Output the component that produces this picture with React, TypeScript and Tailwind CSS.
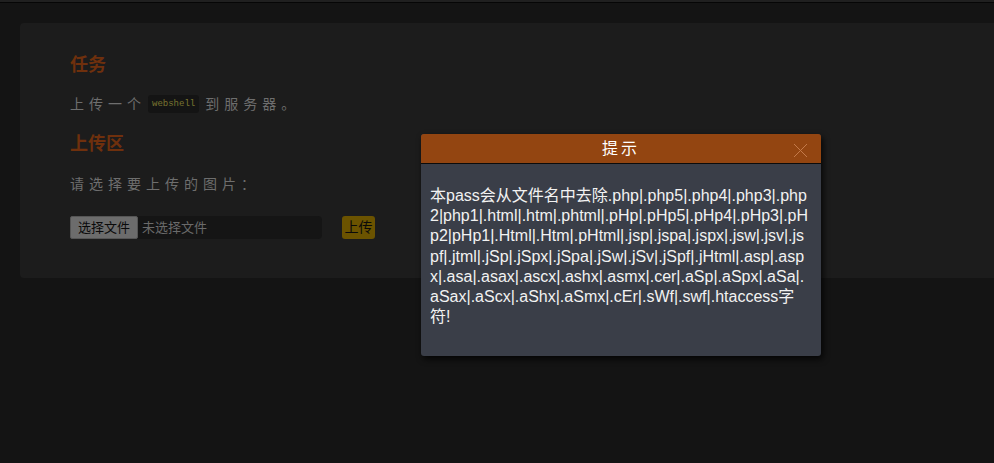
import React from "react";

const cjk = { fontFamily: '"Liberation Sans", "Noto Sans CJK SC", sans-serif' };

export default function App() {
  return (
    <div className="relative h-[463px] w-full overflow-hidden bg-[#141414]" style={cjk}>
      {/* top edge */}
      <div className="h-[2px] bg-[#202020]" />
      <div className="h-px bg-[#060606]" />

      {/* dimmed page panel */}
      <div className="ml-[20px] mt-[20px] h-[255px] rounded-l-[4px] bg-[#1c1c1c] pl-[50px] pt-[30px]">
        <h2 className="text-[18px] font-bold leading-[24px] text-[#6f300d]">任务</h2>
        <p className="mt-[17px] flex items-center text-[14px] leading-[20px] tracking-[5px] text-[#6e6e6e]">
          <span>上传一个</span>
          <code
            className="mx-[2px] rounded-[3px] bg-[#141414] px-[4px] py-[3px] text-[9px] leading-[12px] tracking-normal text-[#7a7430]"
            style={{ fontFamily: '"Liberation Mono", "DejaVu Sans Mono", monospace' }}
          >
            webshell
          </code>
          <span className="ml-[4px]">到服务器。</span>
        </p>
        <h2 className="mt-[18px] text-[18px] font-bold leading-[24px] text-[#6f300d]">上传区</h2>
        <p className="mt-[18px] text-[14px] leading-[20px] tracking-[5px] text-[#6e6e6e]">请选择要上传的图片：</p>
        <div className="mt-[22px] flex items-center">
          <div className="flex h-[23px] w-[252px] items-center rounded-[4px] bg-[#151515]">
            <span className="flex h-[23px] items-center rounded-[2px] border border-[#555] bg-[#6c6c6c] px-[7px] text-[13px] text-[#0a0a0a]">
              选择文件
            </span>
            <span className="ml-[4px] text-[13px] text-[#6a6a6a]">未选择文件</span>
          </div>
          <span className="ml-[20px] flex h-[23px] w-[33px] items-center justify-center rounded-[3px] bg-[#6b5300] text-[14px] text-[#0a0a0a]">
            上传
          </span>
        </div>
      </div>

      {/* dialog */}
      <div className="absolute left-[421px] top-[134px] w-[400px] overflow-hidden rounded-[3px] bg-[#3a3e48] shadow-[2px_3px_6px_rgba(0,0,0,0.8)]">
        <div className="relative flex h-[30px] items-center justify-center border-b border-[#0b0b0b] bg-[#934511]">
          <span className="text-[16px] tracking-[3px] text-white">提示</span>
          <svg className="absolute right-[13px] top-[9px]" width="15" height="15" viewBox="0 0 15 15">
            <path d="M1 1 L14 14 M14 1 L1 14" stroke="#c47a4a" strokeWidth="1" fill="none" />
          </svg>
        </div>
        <div className="pl-[9px] pr-[10px] pb-[29px] pt-[22px] text-[16px] leading-[20.2px] text-[#f2f2f2] [word-break:break-all]">
          本pass会从文件名中去除.php|.php5|.php4|.php3|.php2|php1|.html|.htm|.phtml|.pHp|.pHp5|.pHp4|.pHp3|.pHp2|pHp1|.Html|.Htm|.pHtml|.jsp|.jspa|.jspx|.jsw|.jsv|.jspf|.jtml|.jSp|.jSpx|.jSpa|.jSw|.jSv|.jSpf|.jHtml|.asp|.aspx|.asa|.asax|.ascx|.ashx|.asmx|.cer|.aSp|.aSpx|.aSa|.aSax|.aScx|.aShx|.aSmx|.cEr|.sWf|.swf|.htaccess字符!
        </div>
      </div>
    </div>
  );
}
